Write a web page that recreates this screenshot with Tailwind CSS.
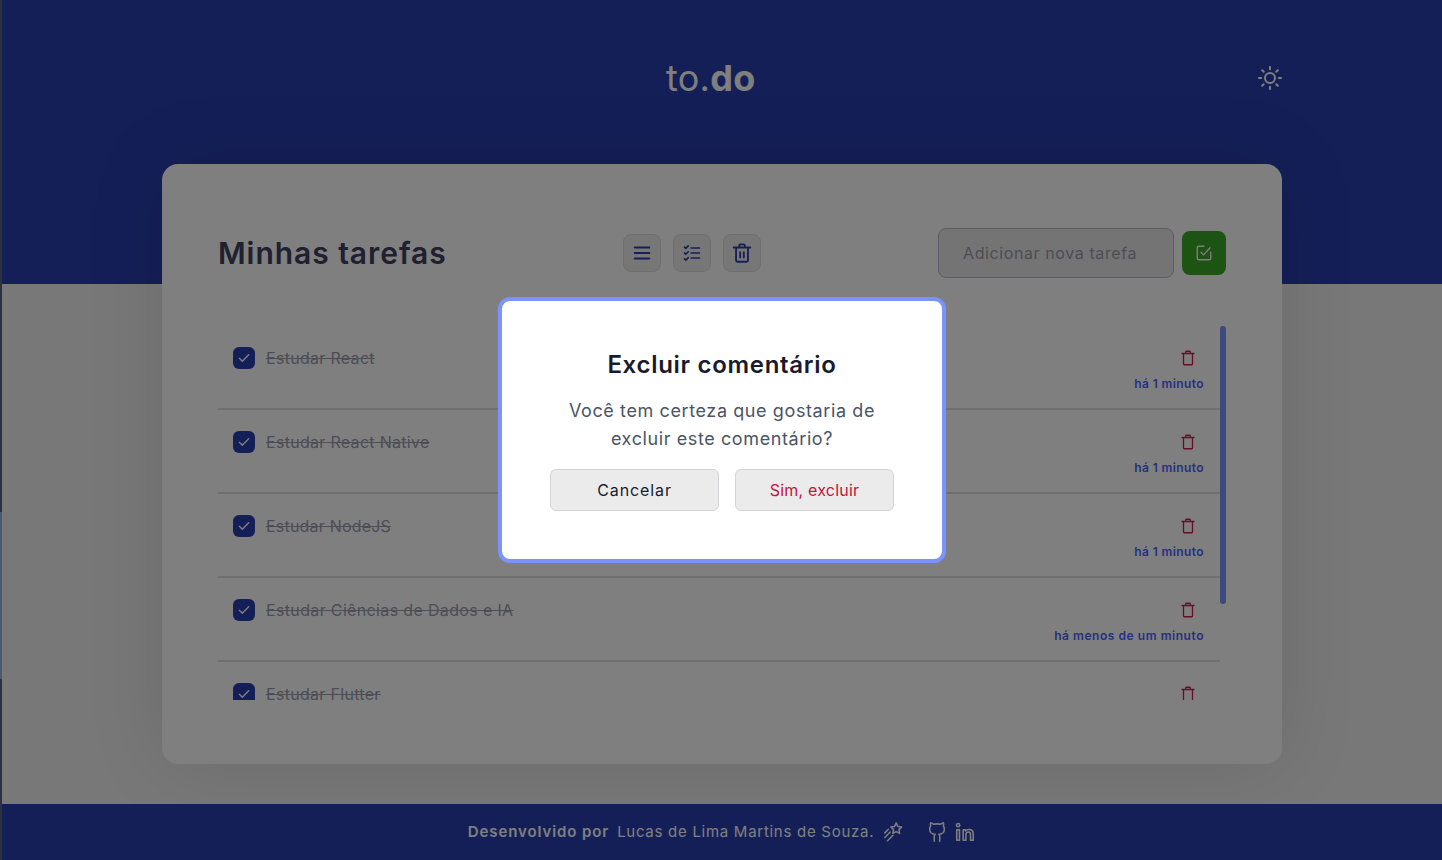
<!DOCTYPE html>
<html lang="pt-BR">
  <head>
    <meta charset="UTF-8" />
    <meta name="viewport" content="width=device-width, initial-scale=1.0" />
    <title>to.do</title>
    <script src="https://cdn.jsdelivr.net/npm/@tailwindcss/browser@4"></script>
  </head>
  <body class="h-[860px] overflow-hidden bg-[linear-gradient(to_bottom,#586080_512px,#94b4e0_512px,#94b4e0_679px,#586080_679px)] font-['Inter',sans-serif]">
    <div class="ml-[2px] flex h-[860px] flex-col bg-[#f0f0f0]">
      <header class="h-[284px] shrink-0 bg-[#283eb0]">
        <div class="flex h-[156px] items-center pl-[664px] pr-[160px]">
          <h1 class="text-[36px] tracking-[0.3px] text-white">to.<b class="font-bold">do</b></h1>
          <svg class="ml-auto h-[24px] w-[24px] text-white" viewBox="0 0 24 24" fill="none" stroke="currentColor" stroke-width="2" stroke-linecap="round">
            <circle cx="12" cy="12" r="5" />
            <path d="M12 1v2.200M12 20.800V23M1 12h2.200M20.800 12H23M4.200 4.200l1.500 1.500M18.300 18.300l1.500 1.500M4.200 19.800l1.500-1.500M18.300 5.700l1.500-1.500" />
          </svg>
        </div>
      </header>

      <main class="ml-[160px] mt-[-120px] flex h-[600px] w-[1120px] shrink-0 flex-col rounded-2xl bg-white px-[56px] shadow-[0_0_80px_rgba(0,0,0,0.1)]">
        <div class="flex h-[162px] shrink-0 items-center pt-[16px]">
          <h2 class="w-[405px] text-[30px] font-semibold tracking-[0.95px] text-[#404060]">Minhas tarefas</h2>
          <div class="flex gap-3">
            <button class="flex h-[38px] w-[38px] items-center justify-center rounded-lg border border-[#dcdce0] bg-[#eeeeee] text-[#283eb0]">
              <svg class="h-[22px] w-[22px]" viewBox="0 0 24 24" fill="none" stroke="currentColor" stroke-width="2" stroke-linecap="round"><path d="M4 6h16M4 12h16M4 18h16" /></svg>
            </button>
            <button class="flex h-[38px] w-[38px] items-center justify-center rounded-lg border border-[#dcdce0] bg-[#eeeeee] text-[#283eb0]">
              <svg class="h-[20px] w-[20px]" viewBox="0 0 24 24" fill="none" stroke="currentColor" stroke-width="2" stroke-linecap="round" stroke-linejoin="round"><path d="M3 5l1.500 1.500L7.500 3.500M3 12l1.500 1.500L7.500 10.500M3 19l1.500 1.500L7.500 17.500M11 6h10M11 12h10M11 18h10" /></svg>
            </button>
            <button class="flex h-[38px] w-[38px] items-center justify-center rounded-lg border border-[#dcdce0] bg-[#eeeeee] text-[#283eb0]">
              <svg class="h-[22px] w-[22px]" viewBox="0 0 24 24" fill="none" stroke="currentColor" stroke-width="2" stroke-linecap="round" stroke-linejoin="round"><path d="M3 6h18M9 6V3.500a1 1 0 0 1 1-1h4a1 1 0 0 1 1 1V6M5.500 6v14a1.500 1.500 0 0 0 1.500 1.500h10a1.500 1.500 0 0 0 1.500-1.500V6M10 11v6M14 11v6" /></svg>
            </button>
          </div>
          <div class="ml-auto flex items-center gap-2">
            <input class="h-[50px] w-[236px] rounded-lg border border-[#b8b8d0] bg-[#e8e8e8] px-6 text-[16px] tracking-[0.6px] placeholder:text-[#9a9aa8]" placeholder="Adicionar nova tarefa" />
            <button class="flex h-[44px] w-[44px] items-center justify-center rounded-lg bg-[#3aa626] text-white">
              <svg class="h-[18px] w-[18px]" viewBox="0 0 24 24" fill="none" stroke="currentColor" stroke-width="1.800" stroke-linecap="round" stroke-linejoin="round"><path d="M12 3H5a2 2 0 0 0-2 2v14a2 2 0 0 0 2 2h14a2 2 0 0 0 2-2v-8" /><path d="M8 11l3.500 3.500L20 5" /></svg>
            </button>
          </div>
        </div>

        <div class="flex h-[374px] justify-between">
          <ul class="w-[1002px] overflow-hidden">
            <li class="flex h-[84px] items-start justify-between border-b-2 border-[#dedede] pl-[15px] pr-[16px] pt-[20px]">
              <div class="flex items-center gap-[11px]">
                <span class="flex h-[22px] w-[22px] items-center justify-center rounded-md bg-[#283eb0] text-white"><svg class="h-[16px] w-[16px]" viewBox="0 0 24 24" fill="none" stroke="currentColor" stroke-width="2" stroke-linecap="round" stroke-linejoin="round"><path d="M5 12.500l4.500 4.500L19 7" /></svg></span>
                <span class="text-[16px] tracking-[0.3px] text-[#9a9aac] line-through">Estudar React</span>
              </div>
              <div class="flex flex-col items-end">
                <svg class="mr-[7px] mt-[3px] h-[18px] w-[18px] text-[#c81e4a]" viewBox="0 0 24 24" fill="none" stroke="currentColor" stroke-width="1.800" stroke-linecap="round" stroke-linejoin="round"><path d="M4 6h16M9 6V4a1 1 0 0 1 1-1h4a1 1 0 0 1 1 1v2M6 6v14a1 1 0 0 0 1 1h10a1 1 0 0 0 1-1V6" /></svg>
                <span class="mt-[8px] text-[12px] font-semibold tracking-[0.4px] text-[#4a62ff]">há 1 minuto</span>
              </div>
            </li>
            <li class="flex h-[84px] items-start justify-between border-b-2 border-[#dedede] pl-[15px] pr-[16px] pt-[20px]">
              <div class="flex items-center gap-[11px]">
                <span class="flex h-[22px] w-[22px] items-center justify-center rounded-md bg-[#283eb0] text-white"><svg class="h-[16px] w-[16px]" viewBox="0 0 24 24" fill="none" stroke="currentColor" stroke-width="2" stroke-linecap="round" stroke-linejoin="round"><path d="M5 12.500l4.500 4.500L19 7" /></svg></span>
                <span class="text-[16px] tracking-[0.3px] text-[#9a9aac] line-through">Estudar React Native</span>
              </div>
              <div class="flex flex-col items-end">
                <svg class="mr-[7px] mt-[3px] h-[18px] w-[18px] text-[#c81e4a]" viewBox="0 0 24 24" fill="none" stroke="currentColor" stroke-width="1.800" stroke-linecap="round" stroke-linejoin="round"><path d="M4 6h16M9 6V4a1 1 0 0 1 1-1h4a1 1 0 0 1 1 1v2M6 6v14a1 1 0 0 0 1 1h10a1 1 0 0 0 1-1V6" /></svg>
                <span class="mt-[8px] text-[12px] font-semibold tracking-[0.4px] text-[#4a62ff]">há 1 minuto</span>
              </div>
            </li>
            <li class="flex h-[84px] items-start justify-between border-b-2 border-[#dedede] pl-[15px] pr-[16px] pt-[20px]">
              <div class="flex items-center gap-[11px]">
                <span class="flex h-[22px] w-[22px] items-center justify-center rounded-md bg-[#283eb0] text-white"><svg class="h-[16px] w-[16px]" viewBox="0 0 24 24" fill="none" stroke="currentColor" stroke-width="2" stroke-linecap="round" stroke-linejoin="round"><path d="M5 12.500l4.500 4.500L19 7" /></svg></span>
                <span class="text-[16px] tracking-[0.2px] text-[#9a9aac] line-through">Estudar NodeJS</span>
              </div>
              <div class="flex flex-col items-end">
                <svg class="mr-[7px] mt-[3px] h-[18px] w-[18px] text-[#c81e4a]" viewBox="0 0 24 24" fill="none" stroke="currentColor" stroke-width="1.800" stroke-linecap="round" stroke-linejoin="round"><path d="M4 6h16M9 6V4a1 1 0 0 1 1-1h4a1 1 0 0 1 1 1v2M6 6v14a1 1 0 0 0 1 1h10a1 1 0 0 0 1-1V6" /></svg>
                <span class="mt-[8px] text-[12px] font-semibold tracking-[0.4px] text-[#4a62ff]">há 1 minuto</span>
              </div>
            </li>
            <li class="flex h-[84px] items-start justify-between border-b-2 border-[#dedede] pl-[15px] pr-[16px] pt-[20px]">
              <div class="flex items-center gap-[11px]">
                <span class="flex h-[22px] w-[22px] items-center justify-center rounded-md bg-[#283eb0] text-white"><svg class="h-[16px] w-[16px]" viewBox="0 0 24 24" fill="none" stroke="currentColor" stroke-width="2" stroke-linecap="round" stroke-linejoin="round"><path d="M5 12.500l4.500 4.500L19 7" /></svg></span>
                <span class="text-[16px] tracking-[0.35px] text-[#9a9aac] line-through">Estudar Ciências de Dados e IA</span>
              </div>
              <div class="flex flex-col items-end">
                <svg class="mr-[7px] mt-[3px] h-[18px] w-[18px] text-[#c81e4a]" viewBox="0 0 24 24" fill="none" stroke="currentColor" stroke-width="1.800" stroke-linecap="round" stroke-linejoin="round"><path d="M4 6h16M9 6V4a1 1 0 0 1 1-1h4a1 1 0 0 1 1 1v2M6 6v14a1 1 0 0 0 1 1h10a1 1 0 0 0 1-1V6" /></svg>
                <span class="mt-[8px] text-[12px] font-semibold tracking-[0.55px] text-[#4a62ff]">há menos de um minuto</span>
              </div>
            </li>
            <li class="flex h-[84px] items-start justify-between border-b-2 border-[#dedede] pl-[15px] pr-[16px] pt-[20px]">
              <div class="flex items-center gap-[11px]">
                <span class="flex h-[22px] w-[22px] items-center justify-center rounded-md bg-[#283eb0] text-white"><svg class="h-[16px] w-[16px]" viewBox="0 0 24 24" fill="none" stroke="currentColor" stroke-width="2" stroke-linecap="round" stroke-linejoin="round"><path d="M5 12.500l4.500 4.500L19 7" /></svg></span>
                <span class="text-[16px] tracking-[0.3px] text-[#9a9aac] line-through">Estudar Flutter</span>
              </div>
              <div class="flex flex-col items-end">
                <svg class="mr-[7px] mt-[3px] h-[18px] w-[18px] text-[#c81e4a]" viewBox="0 0 24 24" fill="none" stroke="currentColor" stroke-width="1.800" stroke-linecap="round" stroke-linejoin="round"><path d="M4 6h16M9 6V4a1 1 0 0 1 1-1h4a1 1 0 0 1 1 1v2M6 6v14a1 1 0 0 0 1 1h10a1 1 0 0 0 1-1V6" /></svg>
              </div>
            </li>
          </ul>
          <div class="h-[278px] w-[6px] rounded-full bg-[#7b93ff]"></div>
        </div>
      </main>

      <footer class="mt-auto flex h-[56px] shrink-0 items-center justify-center bg-[#283eb0] text-[15px] text-white">
        <b class="font-semibold tracking-[0.9px]">Desenvolvido por</b>
        <span class="ml-2 tracking-[0.72px]">Lucas de Lima Martins de Souza.</span>
        <svg class="ml-2 h-[22px] w-[22px]" viewBox="0 0 24 24" fill="none" stroke="currentColor" stroke-width="1.700" stroke-linecap="round" stroke-linejoin="round"><path d="M15.500 2l1.900 3.900 4.100.6-3 2.900.7 4.100-3.700-1.900-3.600 1.900.7-4.100-3-2.900 4.100-.6zM9 12l-6 6M12 15.500l-6 6M7 9l-4 4" /></svg>
        <svg class="ml-[22px] h-[22px] w-[22px]" viewBox="0 0 24 24" fill="none" stroke="currentColor" stroke-width="1.700" stroke-linecap="round" stroke-linejoin="round"><path d="M15 22v-4a4.800 4.800 0 0 0-1-3.500c3 0 6-2 6-5.500.08-1.250-.27-2.480-1-3.500.28-1.150.28-2.350 0-3.500 0 0-1 0-3 1.500-2.640-.5-5.360-.5-8 0C6 2 5 2 5 2c-.3 1.150-.3 2.350 0 3.500A5.403 5.403 0 0 0 4 9c0 3.500 3 5.500 6 5.500-.39.49-.68 1.050-.85 1.650-.17.6-.22 1.230-.15 1.850v4" /></svg>
        <svg class="ml-[6px] h-[22px] w-[22px]" viewBox="0 0 24 24" fill="none" stroke="currentColor" stroke-width="1.700" stroke-linecap="round" stroke-linejoin="round"><path d="M3 9.500h3V21H3zM10 21V9.500h2.500V11c1-1.200 2.500-1.800 4-1.800 2.800 0 4.500 2 4.500 5V21h-3v-6.500c0-1.400-.8-2.500-2.200-2.500-1.500 0-2.800 1-2.800 2.700V21z" /><circle cx="4.500" cy="4.500" r="1.800" /></svg>
      </footer>
    </div>

    <!-- modal de exclusao -->
    <div class="fixed inset-0 flex items-start justify-center bg-black/50 pl-[2px] pt-[297px]">
      <div class="flex h-[266px] w-[448px] flex-col items-center rounded-xl border-4 border-[#7b93ff] bg-white pt-[49px]">
        <h3 class="text-[24px] font-semibold leading-[30px] tracking-[0.7px] text-[#1a1a2e]">Excluir comentário</h3>
        <p class="mt-[17px] w-[360px] text-center text-[18px] leading-[28px] tracking-[0.6px] text-[#4a5568]">Você tem certeza que gostaria de excluir este comentário?</p>
        <div class="mt-[16px] flex gap-4">
          <button class="h-[42px] w-[169px] rounded-md border border-[#d4d4d8] bg-[#ebebeb] text-[16px] tracking-[0.9px] text-[#1a1a2e]">Cancelar</button>
          <button class="h-[42px] w-[159px] rounded-md border border-[#d4d4d8] bg-[#ebebeb] text-[16px] tracking-[0.2px] text-[#c2143c]">Sim, excluir</button>
        </div>
      </div>
    </div>
  </body>
</html>
